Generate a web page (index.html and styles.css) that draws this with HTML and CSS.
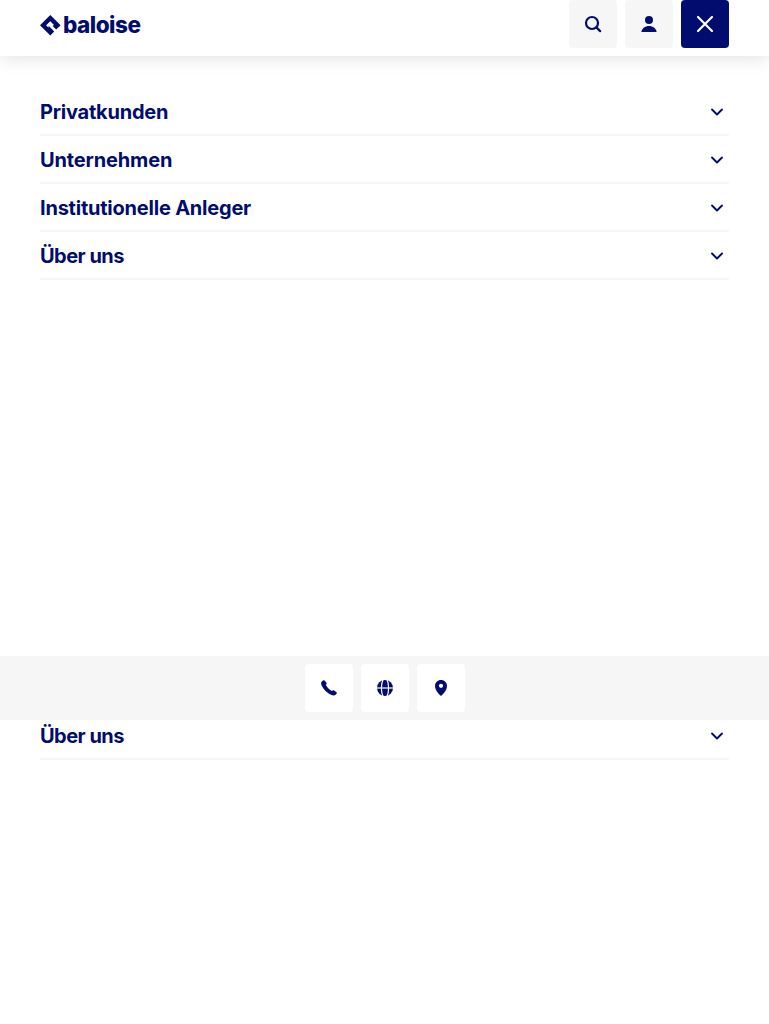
FILE: index.html
```html
<!DOCTYPE html>
<html lang="de">
<head>
<meta charset="utf-8">
<title>Baloise</title>
<link rel="stylesheet" href="styles.css">
</head>
<body>
<svg class="defs" aria-hidden="true"><symbol id="chevron" viewBox="0 0 14 10"><path d="M2 2.500l5 5 5-5" fill="none" stroke="currentColor" stroke-width="1.900" stroke-linecap="round" stroke-linejoin="round"/></symbol></svg>
<header class="header">
  <a class="logo" aria-label="baloise">
    <svg class="logo-mark" width="21" height="21" viewBox="0 0 21 21"><path d="M10.300 0L20.600 10.200 16.200 14.600 12.600 11 14 9.900 10.300 6.200 6.100 10.300 8.600 12.800V10.800L10.800 12.900 14.200 16.400 10.300 20.500 0 10.200Z" fill="currentColor"/></svg>
    <span class="logo-word">baloise</span>
  </a>
  <div class="actions">
    <button class="button" aria-label="Suche"><svg width="18" height="18" viewBox="0 0 18 18" fill="none" stroke="currentColor"><circle cx="8" cy="8" r="6" stroke-width="2.200"/><path d="M12.500 12.500l3.600 3.600" stroke-width="2.300" stroke-linecap="round"/></svg></button>
    <button class="button" aria-label="Login"><svg width="16" height="16" viewBox="0 0 16 16" fill="currentColor"><circle cx="8" cy="4" r="4"/><path d="M.3 16C1 12.300 4.100 10 8 10s7 2.300 7.700 6Z"/></svg></button>
    <button class="button button-close" aria-label="Schliessen"><svg width="18" height="18" viewBox="0 0 18 18"><path d="M2 2l14 14M16 2L2 16" stroke="currentColor" stroke-width="2.200" stroke-linecap="round"/></svg></button>
  </div>
</header>
<nav class="menu">
  <a class="row"><span class="label label-private">Privatkunden</span><svg class="chevron"><use href="#chevron"/></svg></a>
  <a class="row"><span class="label label-business">Unternehmen</span><svg class="chevron"><use href="#chevron"/></svg></a>
  <a class="row"><span class="label label-investors">Institutionelle Anleger</span><svg class="chevron"><use href="#chevron"/></svg></a>
  <a class="row"><span class="label label-about">Über uns</span><svg class="chevron"><use href="#chevron"/></svg></a>
</nav>
<div class="contact-bar">
  <button class="button" aria-label="Telefon"><svg width="18" height="18" viewBox="0 0 18 18" fill="currentColor"><path d="M2.200 2.100C3 1.300 3.900.9 4.500 1.400L6.300 3.400C6.900 4.100 6.700 4.900 5.900 5.800 6.800 8.300 9.200 10.700 11.800 11.900 12.700 11.200 13.500 10.900 14.200 11.400L16.500 13.200C17.200 13.800 16.700 14.700 15.900 15.500 14.800 16.600 13.200 16.900 11.500 16.100 6.900 14 3.500 10.500 1.500 6.200.8 4.600 1 3.200 2.200 2.100Z"/></svg></button>
  <button class="button" aria-label="Sprache"><svg width="18" height="18" viewBox="0 0 18 18"><circle cx="9" cy="9" r="8" fill="currentColor"/><g fill="none" stroke="#fff" stroke-width="1.200"><path d="M1 9h16"/><path d="M7.200.3C4.800 5 4.800 13 7.200 17.700M10.800.3c2.400 4.700 2.400 12.700 0 17.400"/></g></svg></button>
  <button class="button" aria-label="Standort"><svg width="18" height="18" viewBox="0 0 18 18"><path fill="currentColor" fill-rule="evenodd" d="M9 1C5.700 1 3 3.500 3 6.900 3 10.600 6.200 14.500 9 17c2.800-2.500 6-6.400 6-10.100C15 3.500 12.300 1 9 1ZM9 4.700a2.100 2.100 0 1 1 0 4.200 2.100 2.100 0 0 1 0-4.200Z"/></svg></button>
</div>
<div class="menu-rest">
  <a class="row row-cut"><span class="label label-about">Über uns</span><svg class="chevron"><use href="#chevron"/></svg></a>
</div>
</body>
</html>
```
FILE: styles.css
```css
* { box-sizing: border-box; }
body {
  margin: 0;
  min-height: 1024px;
  background: #fff;
  color: #000d6e;
  font-family: Inter, "Liberation Sans", sans-serif;
}
.defs { display: none; }
.header {
  display: flex;
  justify-content: space-between;
  height: 56px;
  padding: 0 40px;
  box-shadow: 0 0 20px rgba(0, 0, 0, .15);
}
.logo { display: flex; align-items: center; height: 50px; gap: 2px; }
.logo-word {
  font-size: 22.500px;
  font-weight: 800;
  line-height: 30px;
  letter-spacing: -.5px;
}
.actions { display: flex; gap: 8px; }
.button {
  display: flex;
  align-items: center;
  justify-content: center;
  width: 48px;
  height: 48px;
  padding: 0;
  border: 0;
  border-radius: 4px;
  background: #f6f6f6;
  color: #000d6e;
}
.button-close { background: #000d6e; color: #fff; }
.menu { height: 600px; padding: 32px 40px 0; }
.row {
  display: flex;
  align-items: center;
  justify-content: space-between;
  height: 48px;
  padding-right: 5px;
  border-bottom: 2px solid #f6f6f6;
}
.label { padding-top: 2px; font-size: 20px; font-weight: 700; line-height: 24px; white-space: nowrap; }
.label-private { letter-spacing: -.23px; }
.label-business { letter-spacing: -.15px; }
.label-investors { letter-spacing: -.22px; }
.label-about { letter-spacing: -.53px; }
.chevron { width: 14px; height: 10px; margin-top: 2px; }
.contact-bar {
  display: flex;
  justify-content: center;
  gap: 8px;
  height: 64px;
  padding: 8px 0 8px 1px;
  background: #f6f6f6;
}
.contact-bar .button { background: #fff; }
.menu-rest { padding: 0 40px; }
.row-cut { height: 40px; padding-bottom: 8px; }
```
